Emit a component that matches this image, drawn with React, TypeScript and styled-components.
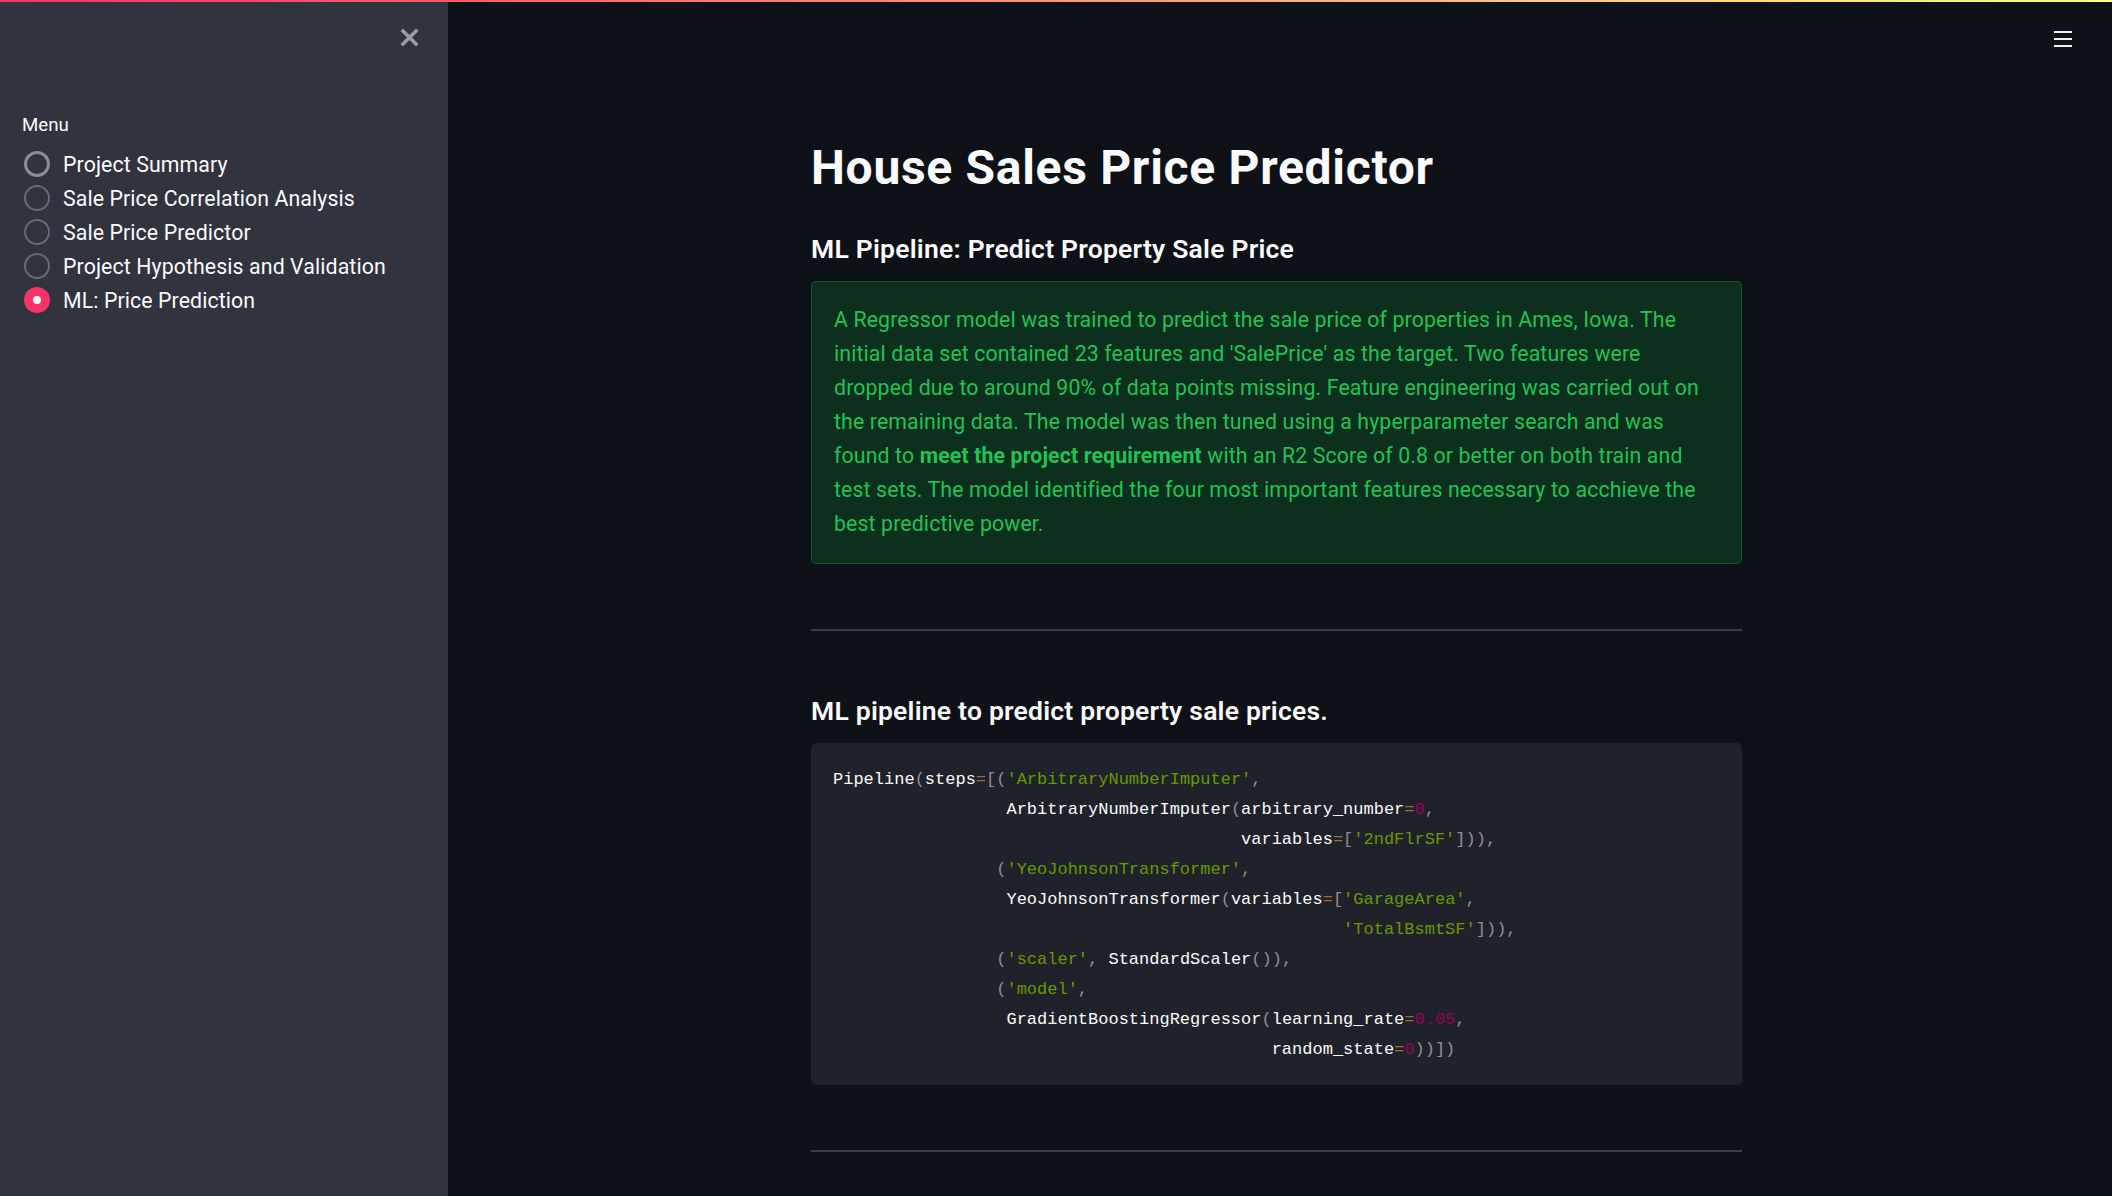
import React from 'react'
import styled, { createGlobalStyle } from 'styled-components'

const GlobalStyle = createGlobalStyle`
  html, body, #root {
    margin: 0;
    padding: 0;
    height: 100%;
  }

  body {
    background: #0e1117;
    color: #fafafa;
    font-family: Roboto, 'Noto Sans', sans-serif;
  }
`

const Page = styled.div`
  display: flex;
  flex-direction: column;
  height: 100vh;
  overflow: hidden;
`

const Decoration = styled.div`
  height: 2px;
  flex-shrink: 0;
  background: linear-gradient(90deg, #f63366, #fffd80);
`

const Body = styled.div`
  display: flex;
  flex: 1;
  min-height: 0;
`

const Sidebar = styled.aside`
  width: 448px;
  flex-shrink: 0;
  box-sizing: border-box;
  background-color: #31333f;
  padding: 26px 29px 0 22px;
  display: flex;
  flex-direction: column;
`

const CloseRow = styled.div`
  display: flex;
  justify-content: flex-end;
  height: 19px;

  svg {
    width: 19px;
    height: 19px;
  }
`

const MenuLabel = styled.div`
  margin-top: 63px;
  font-size: 18.7px;
  line-height: 30px;
  color: #fafafa;
`

const RadioList = styled.div`
  margin-top: 7px;
  display: flex;
  flex-direction: column;
`

const RadioRow = styled.label`
  display: flex;
  align-items: center;
  height: 34px;
  font-size: 21.3px;
  letter-spacing: 0.1px;
  color: #fafafa;
  cursor: pointer;
`

const RadioCircle = styled.span<{ $checked?: boolean; $focused?: boolean }>`
  box-sizing: border-box;
  width: 26px;
  height: 26px;
  margin: 0 13px 0 2px;
  border-radius: 50%;
  display: flex;
  align-items: center;
  justify-content: center;
  border: ${({ $checked, $focused }) =>
    $checked ? 'none' : $focused ? '3px solid #8b8c92' : '2px solid #686a73'};
  background-color: ${({ $checked }) => ($checked ? '#f63366' : 'transparent')};

  &:after {
    content: '';
    display: ${({ $checked }) => ($checked ? 'block' : 'none')};
    width: 8px;
    height: 8px;
    border-radius: 50%;
    background: #f5f5f7;
  }
`

const Main = styled.main`
  flex: 1;
  display: flex;
  flex-direction: column;
  padding-right: 7px;
  overflow: hidden;
`

const Header = styled.header`
  display: flex;
  justify-content: flex-end;
  height: 60px;
  padding: 29px 33px 0 0;
  box-sizing: border-box;
`

const MenuButton = styled.button`
  display: flex;
  flex-direction: column;
  gap: 5px;
  padding: 0;
  background: none;
  border: none;

  span {
    display: block;
    width: 18px;
    height: 2px;
    background: #f0f0f0;
  }
`

const Content = styled.div`
  width: 931px;
  margin: 0 auto;
  padding-top: 77px;
`

const Title = styled.h1`
  margin: 0;
  font-size: 48px;
  font-weight: 700;
  line-height: 58px;
  letter-spacing: 0.7px;
  color: #fafafa;
`

const SubHeader = styled.h2<{ $gap: number }>`
  margin: ${({ $gap }) => $gap}px 0 16px;
  font-size: 26.5px;
  font-weight: 600;
  line-height: 32px;
  letter-spacing: 0.22px;
  color: #fafafa;
`

const SuccessBox = styled.div`
  box-sizing: border-box;
  border: 1px solid rgba(33, 195, 84, 0.28);
  border-radius: 5px;
  background-color: rgba(9, 171, 59, 0.2);
  padding: 21px 31px 22px 22px;
  font-size: 21.3px;
  line-height: 34px;
  letter-spacing: 0.12px;
  color: #21c354;

  strong {
    font-weight: 700;
  }
`

const Divider = styled.hr`
  margin: 65px 0 0;
  height: 2px;
  border: none;
  background-color: #3a3c43;
`

const CodeBlock = styled.pre`
  margin: 0;
  padding: 22px 22px 20px;
  border-radius: 5px;
  background-color: #20222b;
  font-family: 'Liberation Mono', 'DejaVu Sans Mono', monospace;
  font-size: 17px;
  line-height: 30px;
  color: #fafafa;
  white-space: pre;
`

type TokenKind = 'plain' | 'punct' | 'op' | 'str' | 'num'

const tokenColors: Record<TokenKind, string> = {
  plain: '#fafafa',
  punct: '#8e8f94',
  op: '#9a6e3a',
  str: '#669900',
  num: '#990055',
}

const Token = styled.span<{ $kind: TokenKind }>`
  color: ${({ $kind }) => tokenColors[$kind]};
`

const menuItems = [
  'Project Summary',
  'Sale Price Correlation Analysis',
  'Sale Price Predictor',
  'Project Hypothesis and Validation',
  'ML: Price Prediction',
]

const pipelineCode = `Pipeline(steps=[('ArbitraryNumberImputer',
                 ArbitraryNumberImputer(arbitrary_number=0,
                                        variables=['2ndFlrSF'])),
                ('YeoJohnsonTransformer',
                 YeoJohnsonTransformer(variables=['GarageArea',
                                                  'TotalBsmtSF'])),
                ('scaler', StandardScaler()),
                ('model',
                 GradientBoostingRegressor(learning_rate=0.05,
                                           random_state=0))])`

const tokenize = (line: string) => {
  const re = /('[^']*')|(\d+(?:\.\d+)?)|(=)|([()[\],])|([^'\d=()[\],]+)/g
  const out: { kind: TokenKind; text: string }[] = []
  let m: RegExpExecArray | null
  while ((m = re.exec(line))) {
    if (m[1]) out.push({ kind: 'str', text: m[1] })
    else if (m[2]) out.push({ kind: 'num', text: m[2] })
    else if (m[3]) out.push({ kind: 'op', text: m[3] })
    else if (m[4]) out.push({ kind: 'punct', text: m[4] })
    else out.push({ kind: 'plain', text: m[5] })
  }
  return out
}

const CloseIcon = () => (
  <svg viewBox="0 0 19 19">
    <path d="M3 3 L16 16 M16 3 L3 16" stroke="#9a9ba0" strokeWidth="3.6" strokeLinecap="square" />
  </svg>
)

const App = () => {
  return (
    <>
      <GlobalStyle />
      <Page>
        <Decoration />
        <Body>
          <Sidebar>
            <CloseRow>
              <CloseIcon />
            </CloseRow>
            <MenuLabel>Menu</MenuLabel>
            <RadioList>
              {menuItems.map((item, i) => (
                <RadioRow key={item}>
                  <RadioCircle $checked={i === menuItems.length - 1} $focused={i === 0} />
                  <span>{item}</span>
                </RadioRow>
              ))}
            </RadioList>
          </Sidebar>
          <Main>
            <Header>
              <MenuButton aria-label="menu">
                <span />
                <span />
                <span />
              </MenuButton>
            </Header>
            <Content>
              <Title>House Sales Price Predictor</Title>
              <SubHeader $gap={36}>ML Pipeline: Predict Property Sale Price</SubHeader>
              <SuccessBox>
                A Regressor model was trained to predict the sale price of properties in Ames, Iowa. The initial
                data set contained 23 features and 'SalePrice' as the target. Two features were dropped due to
                around 90% of data points missing. Feature engineering was carried out on the remaining data. The
                model was then tuned using a hyperparameter search and was found to{' '}
                <strong>meet the project requirement</strong> with an R2 Score of 0.8 or better on both train and
                test sets. The model identified the four most important features necessary to acchieve the best
                predictive power.
              </SuccessBox>
              <Divider />
              <SubHeader $gap={64}>ML pipeline to predict property sale prices.</SubHeader>
              <CodeBlock>
                {pipelineCode.split('\n').map((line, i) => (
                  <div key={i}>
                    {tokenize(line).map((t, j) => (
                      <Token key={j} $kind={t.kind}>
                        {t.text}
                      </Token>
                    ))}
                  </div>
                ))}
              </CodeBlock>
              <Divider />
            </Content>
          </Main>
        </Body>
      </Page>
    </>
  )
}

export default App
